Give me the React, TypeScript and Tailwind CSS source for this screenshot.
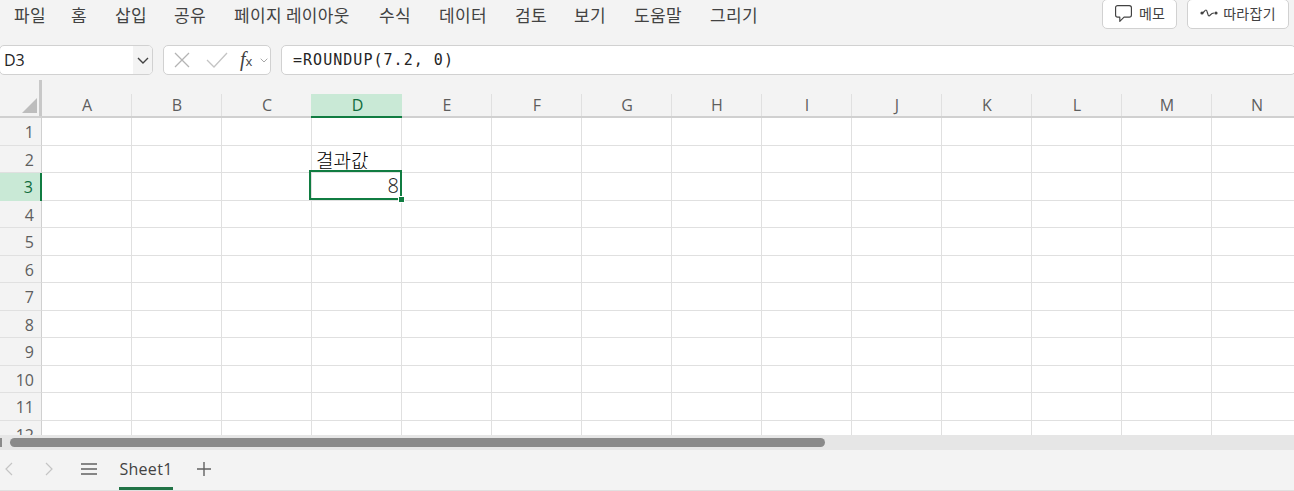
const menus = [
  { label: "파일", width: "w-[57px]" },
  { label: "홈", width: "w-[44px]" },
  { label: "삽입", width: "w-[59px]" },
  { label: "공유", width: "w-[60px]" },
  { label: "페이지 레이아웃", width: "w-[145px]" },
  { label: "수식", width: "w-[60px]" },
  { label: "데이터", width: "w-[76px]" },
  { label: "검토", width: "w-[59px]" },
  { label: "보기", width: "w-[60px]" },
  { label: "도움말", width: "w-[76px]" },
  { label: "그리기", width: "w-[76px]" },
];

const columns = ["A", "B", "C", "D", "E", "F", "G", "H", "I", "J", "K", "L", "M", "N"];
const rows = [1, 2, 3, 4, 5, 6, 7, 8, 9, 10, 11, 12];

const sans = "font-['Open_Sans','Noto_Sans_CJK_KR',sans-serif]";
const korean = "font-['Noto_Sans_CJK_KR',sans-serif]";

export default function App() {
  return (
    <div className={`w-[1294px] h-[491px] overflow-hidden bg-[#f3f3f3] flex flex-col ${sans}`}>
      <Ribbon />
      <FormulaBar />
      <Sheet />
      <ScrollBar />
      <TabBar />
    </div>
  );
}

function Ribbon() {
  return (
    <div className="h-[45px] shrink-0 flex items-start justify-between pl-[14px] pr-[5px]">
      <div className={`flex h-[29px] items-center text-[17px] tracking-[0.3px] text-[#424242] ${korean}`}>
        {menus.map((m) => (
          <div key={m.label} className={`${m.width} whitespace-nowrap`}>
            {m.label}
          </div>
        ))}
      </div>
      <div className={`flex gap-[10px] text-[14px] text-[#424242] ${korean}`}>
        <button className="w-[75px] h-[30px] -mt-[1px] pb-[2px] bg-white border border-[#d1d1d1] rounded-[5px] flex items-center justify-center gap-[6px]">
          <CommentIcon />
          메모
        </button>
        <button className="w-[102px] h-[30px] -mt-[1px] pb-[2px] bg-white border border-[#d1d1d1] rounded-[5px] flex items-center justify-center gap-[5px] tracking-[0.3px]">
          <CatchUpIcon />
          따라잡기
        </button>
      </div>
    </div>
  );
}

function FormulaBar() {
  return (
    <div className="h-[30px] shrink-0 flex gap-[10px]">
      <div className="w-[154px] h-[30px] -ml-[1px] bg-white border border-[#d1d1d1] rounded-[5px] flex overflow-hidden">
        <div className="flex-1 pl-[4px] text-[16px] leading-[29px] text-[#242424]">D3</div>
        <div className="w-[19px] bg-[#f3f3f3] flex items-center justify-center">
          <ChevronIcon className="w-[12px] h-[12px] text-[#424242]" />
        </div>
      </div>
      <div className="w-[108px] h-[30px] bg-white border border-[#d1d1d1] rounded-[5px] flex items-center pl-[9px]">
        <svg viewBox="0 0 18 18" className="w-[18px] h-[18px] text-[#b4b4b4]" fill="none" stroke="currentColor" strokeWidth="1.3">
          <path d="M2 2l14 14M16 2L2 16" />
        </svg>
        <svg viewBox="0 0 22 18" className="w-[22px] h-[18px] ml-[15px] text-[#c4c4c4]" fill="none" stroke="currentColor" strokeWidth="1.3">
          <path d="M1 9l7 7L21 2" />
        </svg>
        <span className="ml-[12px] w-[18px] font-['Liberation_Serif',serif] italic text-[20px] leading-none text-[#424242] relative -top-[1px]">
          f<span className="text-[13px] not-italic font-['Open_Sans',sans-serif]">x</span>
        </span>
        <ChevronIcon className="ml-[2px] w-[8px] h-[8px] text-[#a0a0a0]" />
      </div>
      <div className="flex-1 h-[30px] -mr-[2px] bg-white border border-[#d1d1d1] rounded-[5px] pl-[11px] font-['DejaVu_Sans_Mono',monospace] text-[15px] tracking-[1.03px] leading-[28px] text-[#242424] whitespace-pre">
        =ROUNDUP(7.2, 0)
      </div>
    </div>
  );
}

function Sheet() {
  return (
    <div className="h-[360px] shrink-0 overflow-hidden flex flex-col">
      {/* column headers */}
      <div className="h-[43px] shrink-0 flex items-stretch border-b-2 border-[#d0d0d0]">
        <div className="w-[42px] shrink-0 mt-[5px] border-r-[3px] border-[#c8c8c8] flex items-end justify-end pr-[2px] pb-[3px]">
          <div className="w-0 h-0 border-l-[15px] border-l-transparent border-b-[15px] border-b-[#bdbdbd]" />
        </div>
        {columns.map((c) => (
          <div key={c} className="w-[90px] shrink-0 flex flex-col justify-end">
            <div
              className={
                c === "D"
                  ? "h-[24px] -mb-[2px] -ml-[1px] pl-[2px] bg-[#c9e9d6] text-[#0f6b3c] text-center text-[16px] leading-[22px] border-b-2 border-[#107c41]"
                  : "h-[22px] pl-[1px] text-[#5e5e5e] text-center text-[16px] leading-[22px] border-r border-[#e0e0e0]"
              }
            >
              {c}
            </div>
          </div>
        ))}
      </div>
      {/* rows */}
      {rows.map((r) => (
        <div key={r} className="h-[27.5px] shrink-0 flex">
          <div
            className={
              r === 3
                ? "w-[42px] shrink-0 bg-[#c9e9d6] text-[#0f6b3c] border-r-2 border-[#107c41] text-right pr-[7px] text-[16px] leading-[28px]"
                : "w-[42px] shrink-0 text-[#5e5e5e] border-r border-b border-[#d0d0d0] border-b-[#e0e0e0] text-right pr-[7px] text-[16px] leading-[28px]"
            }
          >
            {r}
          </div>
          {columns.map((c) => (
            <div key={c} className="w-[90px] shrink-0 bg-white border-r border-b border-[#e0e0e0] relative">
              {c === "D" && r === 2 && (
                <span className={`absolute left-[4px] top-[1px] text-[19px] leading-[26px] font-light text-black whitespace-nowrap ${korean}`}>
                  결과값
                </span>
              )}
              {c === "D" && r === 3 && (
                <div className="absolute z-10 -left-[3px] -top-[3px] w-[93px] h-[30px] border-2 border-[#107c41] text-right pr-[1px] text-[20px] font-light leading-[28px] text-[#1a1a1a]">
                  8
                  <div className="absolute -right-[5px] -bottom-[5px] w-[5px] h-[5px] bg-[#107c41] border border-white box-content" />
                </div>
              )}
            </div>
          ))}
        </div>
      ))}
    </div>
  );
}

function ScrollBar() {
  return (
    <div className="h-[15px] shrink-0 bg-[#e6e6e6] flex items-center">
      <div className="w-[2px] h-[9px] bg-[#8a8a8a]" />
      <div className="ml-[8px] w-[815px] h-[9px] rounded-full bg-[#8a8a8a]" />
    </div>
  );
}

function TabBar() {
  return (
    <div className="h-[41px] shrink-0 border-b border-[#e0e0e0] flex items-center text-[#616161]">
      <svg viewBox="0 0 12 14" className="ml-[3px] -mt-[2px] w-[12px] h-[14px] text-[#c4c4c4]" fill="none" stroke="currentColor" strokeWidth="1.2">
        <path d="M9 1L3 7l6 6" />
      </svg>
      <svg viewBox="0 0 12 14" className="ml-[28px] -mt-[2px] w-[12px] h-[14px] text-[#c4c4c4]" fill="none" stroke="currentColor" strokeWidth="1.2">
        <path d="M3 1l6 6-6 6" />
      </svg>
      <svg viewBox="0 0 16 14" className="ml-[26px] -mt-[2px] w-[16px] h-[14px]" fill="none" stroke="currentColor" strokeWidth="1.4">
        <path d="M0 2h16M0 7h16M0 12h16" />
      </svg>
      <div className="ml-[22px] w-[54px] h-[40px] pb-[2px] relative flex items-center justify-center text-[16px] font-medium text-[#424242] tracking-[0.3px]">
        Sheet1
        <div className="absolute left-0 right-0 bottom-0 h-[3px] bg-[#217346]" />
      </div>
      <svg viewBox="0 0 16 16" className="ml-[23px] -mt-[2px] w-[16px] h-[16px]" fill="none" stroke="currentColor" strokeWidth="1.4">
        <path d="M8 1v14M1 8h14" />
      </svg>
    </div>
  );
}

function ChevronIcon({ className }: { className: string }) {
  return (
    <svg viewBox="0 0 12 12" className={className} fill="none" stroke="currentColor" strokeWidth="1.4">
      <path d="M1 4l5 5 5-5" />
    </svg>
  );
}

function CommentIcon() {
  return (
    <svg width="19" height="19" viewBox="0 0 18 18" fill="none" stroke="#424242" strokeWidth="1.1" strokeLinejoin="round">
      <path d="M3.5 1.5h11a2 2 0 0 1 2 2v7a2 2 0 0 1-2 2H9.5L5.5 16.5v-4h-2a2 2 0 0 1-2-2v-7a2 2 0 0 1 2-2z" />
    </svg>
  );
}

function CatchUpIcon() {
  return (
    <svg width="18" height="10" viewBox="0 0 18 10" fill="none" stroke="#424242" strokeWidth="1.2">
      <circle cx="2" cy="5" r="1.6" fill="#424242" stroke="none" />
      <circle cx="16" cy="5" r="1.6" fill="#424242" stroke="none" />
      <path d="M2 5c2 0 2.5-3 4-3s1.5 6 3 6 1.5-3 5-3" />
    </svg>
  );
}
